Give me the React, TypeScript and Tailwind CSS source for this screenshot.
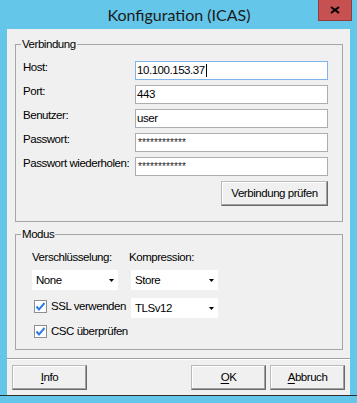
import React from "react";

function Field({
  value,
  focused,
  caret,
  secret,
}: {
  value: string;
  focused?: boolean;
  caret?: boolean;
  secret?: boolean;
}) {
  return (
    <div
      className={`w-[193px] h-[19px] bg-white border ${
        focused ? "border-[#7eb4ea]" : "border-[#abadb3]"
      } flex items-center pl-px leading-[13px] text-black whitespace-nowrap overflow-hidden`}
    >
      {secret ? (
        <span className="text-[10px] tracking-[0.1px] text-[#222] pl-px">{value}</span>
      ) : (
        <span>{value}</span>
      )}
      {caret && <span className="inline-block w-px h-[13px] bg-black ml-px" />}
    </div>
  );
}

function Arrow() {
  return (
    <svg width="5" height="3" viewBox="0 0 5 3" className="block">
      <path d="M0 0H5L2.5 3Z" fill="#000" />
    </svg>
  );
}

function Combo({ value, wide }: { value: string; wide?: boolean }) {
  return (
    <div
      className={`${wide ? "w-[87px]" : "w-[86px]"} h-[20px] bg-white flex items-center justify-between pl-[4px] pr-[4px] leading-[13px]`}
    >
      <span>{value}</span>
      <Arrow />
    </div>
  );
}

function Check() {
  return (
    <div className="w-[13px] h-[13px] border border-[#8f8f8f] bg-white flex items-center justify-center shrink-0">
      <svg width="11" height="11" viewBox="0 0 11 11" className="block">
        <path d="M1.5 5.5L4 8.5L9.5 2" fill="none" stroke="#2f7fe0" strokeWidth="2" />
      </svg>
    </div>
  );
}

function Btn({ children, w }: { children: React.ReactNode; w: string }) {
  return (
    <div
      className={`${w} h-[25px] bg-[#f0f0f0] border border-t-[#b9b9b9] border-l-[#b9b9b9] border-r-[#696969] border-b-[#696969] shadow-[inset_-1px_-1px_0_#a0a0a0,inset_1px_1px_0_#ffffff] flex items-center justify-center leading-[13px] text-black whitespace-nowrap`}
    >
      {children}
    </div>
  );
}

export default function App() {
  return (
    <div className="w-[357px] h-[403px] bg-[#64c6e9] flex flex-col overflow-hidden font-['Liberation_Sans',Arial,sans-serif] text-[11.5px] tracking-[-0.45px] text-black">
      {/* Title bar */}
      <div className="relative h-[29px] shrink-0 flex items-center justify-center">
        <span className="font-['Segoe_UI',Lato,sans-serif] text-[16px] tracking-normal text-[#1b1b1b] pl-[1px]">
          Konfiguration (ICAS)
        </span>
        <div className="absolute left-[318px] top-0 w-[34px] h-[21px] bg-[#c75050] border border-t-0 border-[#8c3d3d] flex items-center justify-center">
          <svg width="10" height="8" viewBox="0 0 10 8" className="block">
            <path d="M1 1L9 7M9 1L1 7" stroke="#000" strokeWidth="2" />
          </svg>
        </div>
      </div>

      {/* Client area */}
      <div className="pl-[7px] shrink-0">
        <div className="w-[343px] h-[366px] bg-[#f0f0f0] flex flex-col">
          {/* Verbindung */}
          <fieldset className="border border-[#a6a6a6] ml-[8px] w-[328px] mt-[9px]">
            <legend className="ml-[5px] px-px leading-[12px]">Verbindung</legend>
            <div className="pl-[7px] pt-[11px] pb-[15px] flex flex-col">
              <div className="flex flex-col gap-[5px]">
                {[
                  { label: "Host:", value: "10.100.153.37", focused: true, caret: true },
                  { label: "Port:", value: "443" },
                  { label: "Benutzer:", value: "user" },
                  { label: "Passwort:", value: "************", secret: true },
                  { label: "Passwort wiederholen:", value: "************", secret: true },
                ].map((r) => (
                  <div key={r.label} className="flex items-start h-[19px]">
                    <div className="w-[112px] leading-[13px] whitespace-nowrap">{r.label}</div>
                    <Field value={r.value} focused={r.focused} caret={r.caret} secret={r.secret} />
                  </div>
                ))}
              </div>
              <div className="w-[305px] flex justify-end mt-[5px]">
                <Btn w="w-[107px]">Verbindung prüfen</Btn>
              </div>
            </div>
          </fieldset>

          {/* Modus */}
          <fieldset className="border border-[#a6a6a6] ml-[8px] w-[328px] mt-[6px]">
            <legend className="ml-[5px] px-px leading-[12px]">Modus</legend>
            <div className="pl-[16px] pt-[11px] pb-[11px] flex flex-col">
              <div className="flex h-[13px] leading-[13px]">
                <div className="w-[97px] whitespace-nowrap">Verschlüsselung:</div>
                <div className="whitespace-nowrap">Kompression:</div>
              </div>
              <div className="flex mt-[6px]">
                <div className="w-[99px]">
                  <Combo value="None" />
                </div>
                <Combo value="Store" wide />
              </div>
              <div className="flex mt-[8px]">
                <div className="w-[97px] ml-[2px] mt-[2px] flex items-center h-[13px] gap-[4px]">
                  <Check />
                  <span className="leading-[13px] whitespace-nowrap">SSL verwenden</span>
                </div>
                <Combo value="TLSv12" wide />
              </div>
              <div className="ml-[2px] mt-[7px] flex items-center h-[13px] gap-[4px]">
                <Check />
                <span className="leading-[13px] whitespace-nowrap">CSC überprüfen</span>
              </div>
            </div>
          </fieldset>

          {/* Separator */}
          <div className="mt-[8px] h-px bg-[#a0a0a0]" />
          <div className="h-px bg-white" />

          {/* Buttons */}
          <div className="mt-[5px] px-[5px] flex">
            <Btn w="w-[75px]">
              <span className="underline underline-offset-[2px]">I</span>nfo
            </Btn>
            <div className="flex-1" />
            <div className="flex gap-[4px]">
              <Btn w="w-[75px]">
                <span className="underline underline-offset-[2px]">O</span>K
              </Btn>
              <Btn w="w-[75px]">
                <span className="underline underline-offset-[2px]">A</span>bbruch
              </Btn>
            </div>
          </div>
        </div>
      </div>

      <div className="h-px bg-[#2e2e2e] shrink-0" />
      <div className="flex-1" />
    </div>
  );
}
